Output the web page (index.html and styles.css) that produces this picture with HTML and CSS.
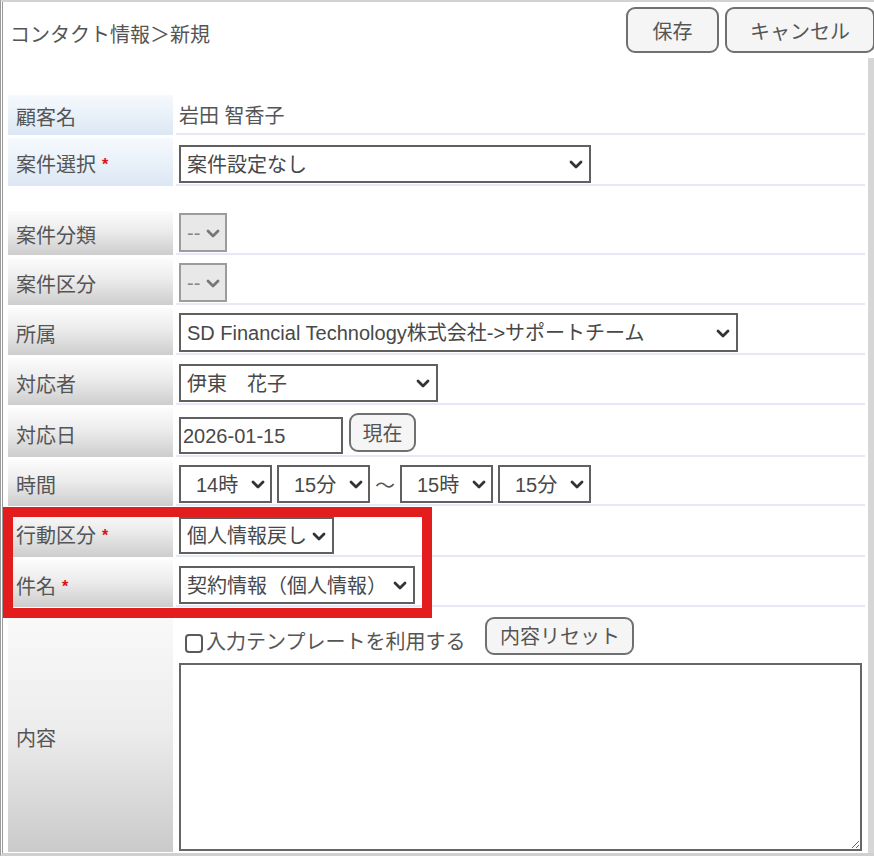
FILE: index.html
```html
<!DOCTYPE html>
<html lang="ja">
<head>
<meta charset="utf-8">
<title>コンタクト情報＞新規</title>
<link rel="stylesheet" href="styles.css">
</head>
<body>
<div class="page">
  <header class="header">
    <h1 class="title">コンタクト情報＞新規</h1>
    <div class="actions">
      <button class="btn btn-save" type="button">保存</button>
      <button class="btn btn-cancel" type="button">キャンセル</button>
    </div>
  </header>
  <main class="body">
    <div class="form">
      <div class="label label-blue">顧客名</div>
      <div class="value value-text">岩田 智香子</div>

      <div class="label label-blue">案件選択<span class="req">*</span></div>
      <div class="value">
        <div class="select select-project"><span>案件設定なし</span><svg viewBox="0 0 14 9" class="chev"><path d="M2 2 L7 7 L12 2"/></svg></div>
      </div>

      <div class="spacer"></div>

      <div class="label">案件分類</div>
      <div class="value">
        <div class="select select-disabled"><span>--</span><svg viewBox="0 0 14 9" class="chev"><path d="M2 2 L7 7 L12 2"/></svg></div>
      </div>

      <div class="label">案件区分</div>
      <div class="value">
        <div class="select select-disabled"><span>--</span><svg viewBox="0 0 14 9" class="chev"><path d="M2 2 L7 7 L12 2"/></svg></div>
      </div>

      <div class="label">所属</div>
      <div class="value">
        <div class="select select-org"><span>SD Financial Technology株式会社-&gt;サポートチーム</span><svg viewBox="0 0 14 9" class="chev"><path d="M2 2 L7 7 L12 2"/></svg></div>
      </div>

      <div class="label">対応者</div>
      <div class="value">
        <div class="select select-person"><span>伊東　花子</span><svg viewBox="0 0 14 9" class="chev"><path d="M2 2 L7 7 L12 2"/></svg></div>
      </div>

      <div class="label">対応日</div>
      <div class="value">
        <input class="date-input" type="text" value="2026-01-15">
        <button class="btn btn-now" type="button">現在</button>
      </div>

      <div class="label">時間</div>
      <div class="value value-time">
        <div class="select select-time"><span>14時</span><svg viewBox="0 0 14 9" class="chev"><path d="M2 2 L7 7 L12 2"/></svg></div>
        <div class="select select-time"><span>15分</span><svg viewBox="0 0 14 9" class="chev"><path d="M2 2 L7 7 L12 2"/></svg></div>
        <span class="tilde">～</span>
        <div class="select select-time"><span>15時</span><svg viewBox="0 0 14 9" class="chev"><path d="M2 2 L7 7 L12 2"/></svg></div>
        <div class="select select-time"><span>15分</span><svg viewBox="0 0 14 9" class="chev"><path d="M2 2 L7 7 L12 2"/></svg></div>
      </div>

      <div class="label">行動区分<span class="req">*</span></div>
      <div class="value">
        <div class="select select-action"><span>個人情報戻し</span><svg viewBox="0 0 14 9" class="chev"><path d="M2 2 L7 7 L12 2"/></svg></div>
      </div>

      <div class="label">件名<span class="req">*</span></div>
      <div class="value">
        <div class="select select-subject"><span>契約情報（個人情報）</span><svg viewBox="0 0 14 9" class="chev"><path d="M2 2 L7 7 L12 2"/></svg></div>
      </div>

      <div class="label label-tall">内容</div>
      <div class="value value-content">
        <div class="template-row">
          <label class="check-label"><span class="checkbox-box"></span>入力テンプレートを利用する</label>
          <button class="btn btn-reset" type="button">内容リセット</button>
        </div>
        <textarea class="content-area"></textarea>
      </div>
    </div>
  </main>
  <div class="highlight"></div>
</div>
</body>
</html>
```
FILE: styles.css
```css
* { box-sizing: border-box; }

html, body {
  margin: 0;
  padding: 0;
  background: #fff;
}

body {
  font-family: "Liberation Sans", "Noto Sans CJK JP", sans-serif;
  font-size: 20px;
  color: #555;
}

.page {
  position: relative;
  width: 874px;
  height: 856px;
  overflow: hidden;
  border-top: 2px solid #d2d2d2;
  border-left: 3px double #9a9a9a;
  border-bottom: 3px solid #d0d0d0;
  background: #fff;
}

.header {
  display: flex;
  justify-content: space-between;
  align-items: flex-start;
  height: 56px;
}

.title {
  margin: 0;
  padding: 21px 0 0 7px;
  font-size: 20px;
  line-height: 24px;
  font-weight: normal;
  color: #555;
}

.actions {
  display: flex;
  gap: 6px;
  margin-top: 5px;
  margin-right: -1px;
}

.btn {
  font-family: inherit;
  font-size: 20px;
  color: #555;
  background: #f5f5f5;
  border: 2px solid #707070;
  border-radius: 9px;
  padding: 3px 0 0;
  line-height: 1;
}

.btn-save { width: 93px; height: 46px; }
.btn-cancel { width: 150px; height: 46px; }
.btn-now { width: 67px; height: 39px; align-self: flex-end; margin-bottom: 2px; }
.btn-reset { width: 149px; height: 38px; padding-top: 2px; }

.body {
  height: 795px;
  padding: 37px 3px 0 5px;
  border-right: 6px solid #d6d6d6;
}

.form {
  display: grid;
  grid-template-columns: 165px 689px;
  grid-template-rows: 40px 48px 19px 44px 47px 47px 47px 49px 46px 48px 47px 242px;
  column-gap: 3px;
  row-gap: 3px;
}

.label {
  display: flex;
  align-items: center;
  padding: 6px 0 0 8px;
  line-height: 26px;
  color: #555;
  background: linear-gradient(to bottom, #fcfcfc 0%, #ececec 45%, #cdcdcd 100%);
}

.label-blue {
  background: linear-gradient(to bottom, #f6f9fd 0%, #e9f1f9 50%, #dbe7f4 100%);
}

.label-tall {
  padding-top: 16px;
  background: linear-gradient(to bottom, #fafafa 0%, #ececec 50%, #cacaca 100%);
}

.req {
  color: #e01010;
  font-size: 16px;
  font-weight: bold;
  margin-left: 6px;
  line-height: 18px;
}

.spacer {
  grid-column: 1 / -1;
}

.value {
  display: flex;
  align-items: flex-end;
  gap: 6px;
  padding: 0 0 1px 3px;
  border-bottom: 2px solid #e7e7f7;
}

.value-text {
  align-items: center;
  padding-top: 4px;
  line-height: 26px;
}

.value-time { gap: 5px; }

.tilde {
  align-self: center;
  line-height: 26px;
  margin-top: 8px;
  color: #555;
}

.select {
  display: flex;
  align-items: center;
  justify-content: space-between;
  height: 38px;
  border: 2px solid #606060;
  background: #fff;
  padding: 1px 6px 0 6px;
  color: #484848;
  white-space: nowrap;
  overflow: hidden;
}

.select span { line-height: 26px; }

.chev {
  flex: none;
  width: 14px;
  height: 9px;
  fill: none;
  stroke: #333;
  stroke-width: 2.8;
  stroke-linecap: round;
  stroke-linejoin: round;
}

.select-project { width: 412px; }
.select-org { width: 559px; height: 39px; }
.select-person { width: 259px; }
.select-time { width: 93px; padding-left: 15px; padding-right: 5px; }
.select-action { width: 155px; height: 37px; }
.select-subject { width: 236px; }

.select-disabled {
  width: 48px;
  height: 39px;
  background: #e8e8e8;
  border-color: #9c9c9c;
  color: #888;
  padding-right: 5px;
}

.select-disabled .chev { stroke: #777; }

.date-input {
  width: 164px;
  height: 37px;
  border: 2px solid #606060;
  padding: 1px 2px 0;
  font-family: inherit;
  font-size: 20px;
  color: #484848;
  outline: none;
  margin: 0;
}

.value-content {
  flex-direction: column;
  align-items: flex-start;
  gap: 0;
  padding-top: 7px;
  padding-bottom: 0;
  border-bottom: none;
}

.template-row {
  display: flex;
  align-items: flex-end;
  gap: 20px;
}

.check-label {
  display: flex;
  align-items: flex-end;
  line-height: 26px;
  color: #555;
}

.checkbox-box {
  flex: none;
  width: 18px;
  height: 19px;
  margin: 0 3px 2px 6px;
  border: 2px solid #5a5a5a;
  border-radius: 4px;
  background: #fff;
}

.content-area {
  width: 683px;
  height: 188px;
  margin-top: 8px;
  border: 2px solid #666;
  resize: both;
  font-family: inherit;
  font-size: 20px;
  padding: 2px;
  outline: none;
}

.highlight {
  position: absolute;
  left: 0;
  top: 505px;
  width: 429px;
  height: 111px;
  border: 10px solid #e31d1d;
  pointer-events: none;
}
```
